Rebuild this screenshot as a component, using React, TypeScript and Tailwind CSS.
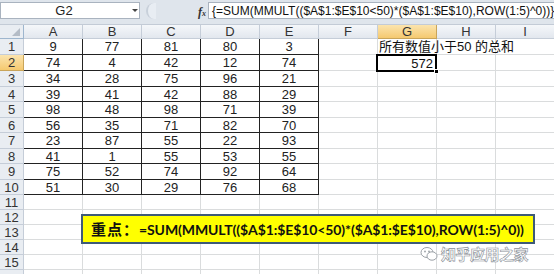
import React from "react";

const data: number[][] = [
  [9, 77, 81, 80, 3],
  [74, 4, 42, 12, 74],
  [34, 28, 75, 96, 21],
  [39, 41, 42, 88, 29],
  [98, 48, 98, 71, 39],
  [56, 35, 71, 82, 70],
  [23, 87, 55, 22, 93],
  [41, 1, 55, 53, 55],
  [75, 52, 74, 92, 64],
  [51, 30, 29, 76, 68],
];

const rowHeights = [
  "h-[16px]", "h-[16px]", "h-[16px]", "h-[15px]", "h-[16px]", "h-[15px]", "h-[16px]", "h-[15px]",
  "h-[16px]", "h-[15px]", "h-[15px]", "h-[15px]", "h-[15px]", "h-[15px]", "h-[15px]", "h-[15px]",
];

const cols = ["A", "B", "C", "D", "E", "F", "G", "H", "I"];

export default function App() {
  return (
    <div
      className="relative w-[554px] h-[274px] overflow-hidden bg-white text-[#222]"
      style={{ fontFamily: '"Liberation Sans", Arial, sans-serif' }}
    >
      {/* Formula bar */}
      <div className="h-[25px] bg-[#dfe5ec] flex items-start pt-[2px] border-b border-[#c3cbd6]">
        <div className="w-[140px] h-[17px] bg-white border border-[#a9b3bf] flex items-center relative">
          <span className="flex-1 text-center text-[13px] leading-none text-[#222] pr-[12px]">G2</span>
          <span className="absolute right-[1px] top-[6px] w-0 h-0 border-l-[3px] border-r-[3px] border-t-[3px] border-l-transparent border-r-transparent border-t-[#444]"></span>
        </div>
        <div className="w-[68px] h-[17px] flex items-center relative">
          <div className="ml-[6px] w-[10px] h-[16px] rounded-l-full border-l-[2px] border-[#c8d0da] bg-[#e8edf3]"></div>
          <span
            className="absolute right-[2px] top-[1px] text-[12px] italic font-bold text-[#333]"
            style={{ fontFamily: '"Liberation Serif", serif' }}
          >
            f<span className="text-[8px] align-baseline">x</span>
          </span>
        </div>
        <div className="flex-1 h-[17px] bg-white border border-[#a9b3bf] border-r-0 flex items-center pl-[3px] overflow-hidden whitespace-nowrap">
          <span className="text-[12px] leading-none text-[#111] tracking-[0px]">
            {"{=SUM(MMULT(($A$1:$E$10<50)*($A$1:$E$10),ROW(1:5)^0))}"}
          </span>
        </div>
      </div>

      {/* Column headers */}
      <div className="grid grid-cols-[24px_repeat(9,59px)] h-[14px]">
        <div className="bg-[#e9edf2] border-r border-b border-[#9eb6ce] relative">
          <span
            className="absolute right-[3px] bottom-[2px] w-0 h-0"
            style={{ borderBottom: "8px solid #b4bcc6", borderLeft: "8px solid transparent" }}
          ></span>
        </div>
        {cols.map((c) => (
          <div
            key={c}
            className={
              c === "G"
                ? "bg-gradient-to-b from-[#fbe4ad] to-[#f5c96f] border-r border-b border-[#c9a55a] flex items-center justify-center text-[13px] leading-none text-[#333]"
                : "bg-gradient-to-b from-[#f5f7fa] to-[#e2e7ee] border-r border-b border-[#c5cdd8] flex items-center justify-center text-[13px] leading-none text-[#333]"
            }
          >
            {c}
          </div>
        ))}
      </div>

      {/* Rows */}
      {rowHeights.map((h, r) => (
        <div key={r} className={"grid grid-cols-[24px_repeat(9,59px)] " + h}>
          <div
            className={
              r === 1
                ? "bg-gradient-to-b from-[#fbe4ad] to-[#f5c96f] border-r border-b border-[#c9a55a] flex items-center justify-center text-[13px] leading-none text-[#333]"
                : "bg-[#e9edf2] border-r border-b border-[#c5cdd8] flex items-center justify-center text-[13px] leading-none text-[#333]"
            }
          >
            {r < 15 ? r + 1 : ""}
          </div>
          {cols.map((c, ci) => {
            const isData = r < 10 && ci < 5;
            return (
              <div
                key={c}
                className={
                  isData
                    ? "border-r border-b border-[#222] flex items-center justify-center text-[13px] leading-none"
                    : "border-r border-b border-[#dadcdd] flex items-center text-[13px] leading-none"
                }
              >
                {isData ? data[r][ci] : null}
              </div>
            );
          })}
        </div>
      ))}

      {/* G1 overflow text */}
      <div
        className="absolute left-[379px] top-[40px] text-[13px] leading-[14px] whitespace-nowrap text-[#111]"
        style={{ fontFamily: '"Liberation Sans", "Noto Sans CJK SC", sans-serif' }}
      >
        所有数值小于50 的总和
      </div>

      {/* G2 selection */}
      <div className="absolute left-[376px] top-[54px] w-[61px] h-[18px] border-2 border-black flex items-center justify-end pr-[2px]">
        <span className="text-[13px] leading-none text-[#111]">572</span>
        <span className="absolute right-[-4px] bottom-[-4px] w-[5px] h-[5px] bg-black border border-white"></span>
      </div>

      {/* Yellow callout */}
      <div className="absolute left-[81px] top-[214px] w-[454px] h-[30px] bg-[#ffff00] border-2 border-[#3e5a78] flex items-center pl-[8px] whitespace-nowrap overflow-hidden">
        <span
          className="text-[15px] font-bold text-[#111] tracking-[1px]"
          style={{ fontFamily: '"Noto Sans CJK SC", sans-serif' }}
        >
          重点：
        </span>
        <span
          className="text-[14px] font-bold text-[#111] tracking-[-0.1px]"
          style={{ fontFamily: 'Lato, "Liberation Sans", sans-serif' }}
        >
          =SUM(MMULT(($A$1:$E$10&lt;50)*($A$1:$E$10),ROW(1:5)^0))
        </span>
      </div>

      {/* Watermark */}
      <div className="absolute left-[420px] top-[243px] flex items-center gap-[3px]">
        <svg width="18" height="16" viewBox="0 0 18 16">
          <ellipse cx="7" cy="6.5" rx="6" ry="5" fill="white" stroke="#9aa0a6" strokeWidth="1" />
          <ellipse cx="12" cy="10" rx="5" ry="4.2" fill="white" stroke="#9aa0a6" strokeWidth="1" />
          <circle cx="5" cy="5.5" r="0.9" fill="#9aa0a6" />
          <circle cx="9" cy="5.5" r="0.9" fill="#9aa0a6" />
        </svg>
        <span
          className="text-[15px] font-bold text-white tracking-[-0.5px]"
          style={{
            fontFamily: '"Noto Sans CJK SC", sans-serif',
            WebkitTextStroke: "0.6px #8a9097",
          }}
        >
          知乎应用之家
        </span>
      </div>
    </div>
  );
}
